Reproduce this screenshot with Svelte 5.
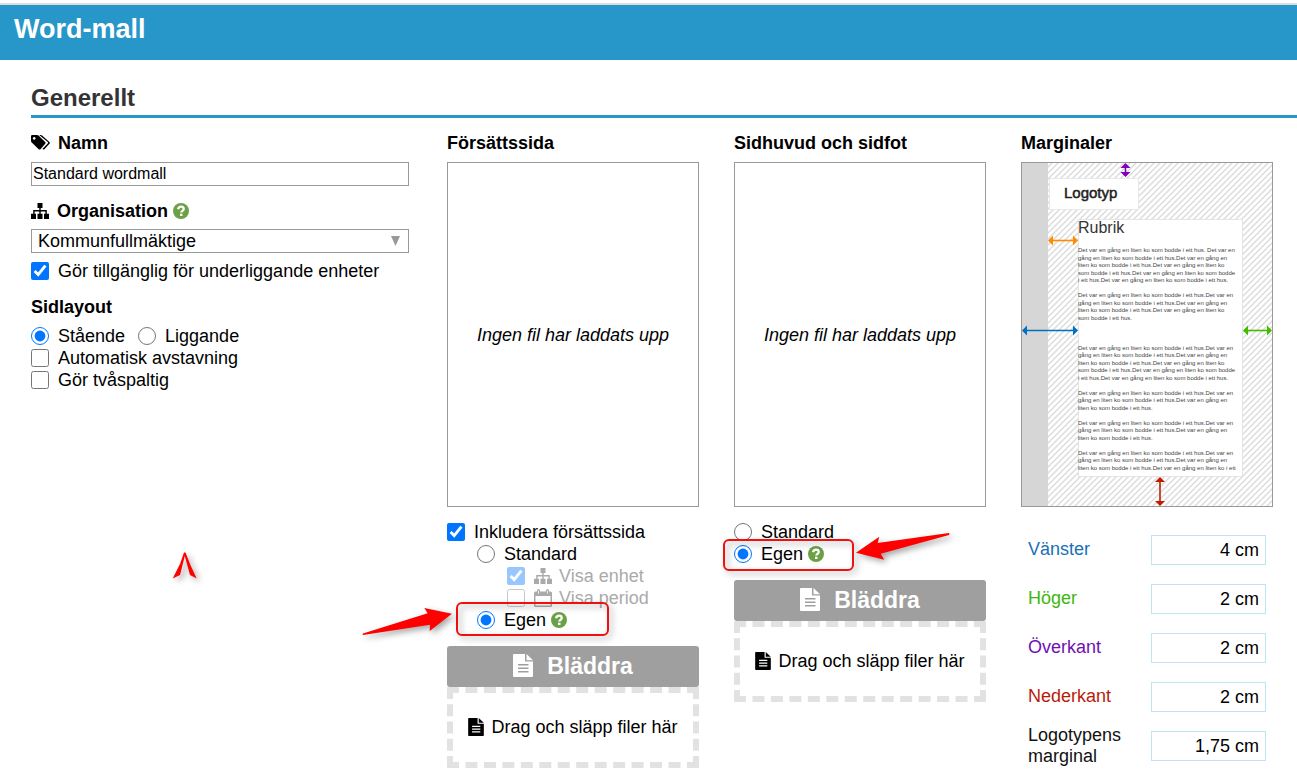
<script>
	let name = $state('Standard wordmall');
	let organisation = $state('Kommunfullmäktige');
	let shareWithUnits = $state(true);
	let orientation = $state('portrait');
	let hyphenation = $state(false);
	let twoColumns = $state(false);
	let includeCover = $state(true);
	let coverType = $state('custom');
	let showUnit = $state(true);
	let showPeriod = $state(false);
	let headerType = $state('custom');

	let margins = $state([
		{ id: 'left', label: 'Vänster', value: '4 cm', color: '#1a6fb8' },
		{ id: 'right', label: 'Höger', value: '2 cm', color: '#3fb60e' },
		{ id: 'top', label: 'Överkant', value: '2 cm', color: '#6d12b0' },
		{ id: 'bottom', label: 'Nederkant', value: '2 cm', color: '#b81c0c' },
		{ id: 'logo', label: 'Logotypens marginal', value: '1,75 cm', color: '#111' }
	]);

	// sample text in the margin preview, empty strings are blank lines
	const long = [
		'Det var en gång en liten ko som bodde i ett hus.Det var en',
		'gång en liten ko som bodde i ett hus.Det var en gång en',
		'liten ko som bodde i ett hus.Det var en gång en liten ko',
		'som bodde i ett hus.Det var en gång en liten ko som bodde',
		'i ett hus.Det var en gång en liten ko som bodde i ett hus.'
	];
	const short = [long[0], long[1], 'liten ko som bodde i ett hus.'];
	const sample = [
		'Det var en gång en liten ko som bodde i ett hus. Det var en', ...long.slice(1), '',
		long[0], long[1], long[2], 'som bodde i ett hus.', '', '', '',
		...long, '',
		...short, '',
		...short, '',
		long[0], long[1], 'liten ko som bodde i ett hus.Det var en gång en liten ko i ett'
	];
</script>

{#snippet sitemap()}
	<svg class="icon" width="18" height="16" viewBox="0 0 18 16" aria-hidden="true">
		<path d="M6.5 0h5v5h-1.8v2h6.1v3.8H18V16h-5v-5.2h1.4V8.4H9.7v2.4h1.8V16h-5v-5.2h1.8V8.4H3.6v2.4H5V16H0v-5.2h2.2V7h6.1V5H6.5z" fill="currentColor" />
	</svg>
{/snippet}

{#snippet help()}
	<svg class="help" width="16" height="16" viewBox="0 0 16 16" role="img" aria-label="Hjälp">
		<circle cx="8" cy="8" r="8" fill="#6ba046" />
		<path d="M5.1 6.3C5.4 4.5 6.5 3.7 8 3.7c1.6 0 2.7.9 2.7 2.2 0 1.9-2.4 1.9-2.4 3.7" fill="none" stroke="#fff" stroke-width="2.3" />
		<path d="M7 10.7h2.5v2.3H7z" fill="#fff" />
	</svg>
{/snippet}

{#snippet fileIcon(width, height)}
	<svg class="icon" {width} {height} viewBox="0 0 20 23" aria-hidden="true">
		<path fill-rule="evenodd" d="M1 0h11v7.5h8V22q0 1-1 1H1q-1 0-1-1V1q0-1 1-1zM5 10v1.4h10.5V10zm0 3.5v1.4h10.5v-1.4zM5 17v1.4h10.5V17z" fill="currentColor" />
		<path d="M13.5 0l6.5 6.2h-6.5z" fill="currentColor" />
	</svg>
{/snippet}

{#snippet upload(id)}
	<button class="browse" type="button">{@render fileIcon(20, 23)}Bläddra</button>
	<div class="dropzone" {id}>{@render fileIcon(16, 18)}Drag och släpp filer här</div>
{/snippet}

{#snippet arrow(x1, y1, x2, y2, color)}
	{@const angle = (Math.atan2(y2 - y1, x2 - x1) * 180) / Math.PI}
	{@const length = Math.hypot(x2 - x1, y2 - y1)}
	<g transform="translate({x1} {y1}) rotate({angle})" fill={color}>
		<path d="M3 -.8H{length - 3}V.8H3z" />
		<path d="M0 0L5 -5V5z" />
		<path d="M{length} 0l-5 -5v10z" />
	</g>
{/snippet}

<header>
	<h1>Word-mall</h1>
</header>

<main>
	<h2>Generellt</h2>

	<div class="columns">
		<section class="general">
			<label class="heading" for="name">
				<svg class="icon" width="19" height="16" viewBox="0 0 19 16" aria-hidden="true">
					<path fill-rule="evenodd" d="M0 1.2Q0 0 1.2 0H6q1 0 2 .9l6.2 6q.9.9 0 1.8L9.5 14.2q-.9.8-1.8 0L1 7.8Q0 7 0 6zM3.2 2a1.4 1.4 0 1 0 .01 0z" fill="currentColor" />
					<path d="M8.2 0h1.6q.8 0 1.6.8l7 6.2q.9.9 0 1.8l-5 5.4q-1.1.8-2-.1l5.3-5.6q.7-.7 0-1.4z" fill="currentColor" />
				</svg>
				Namn
			</label>
			<input id="name" class="text" type="text" bind:value={name} />

			<label class="heading" for="organisation">{@render sitemap()}<span>Organisation {@render help()}</span></label>
			<div class="select">
				<select id="organisation" bind:value={organisation}>
					<option>Kommunfullmäktige</option>
				</select>
				<svg width="9" height="10" viewBox="0 0 9 10" aria-hidden="true"><path d="M0 0h9L4.5 10z" fill="#999" /></svg>
			</div>
			<label class="option share"><input type="checkbox" bind:checked={shareWithUnits} />Gör tillgänglig för underliggande enheter</label>

			<h3 class="heading">Sidlayout</h3>
			<div class="inline">
				<label class="option"><input type="radio" name="orientation" value="portrait" bind:group={orientation} />Stående</label>
				<label class="option"><input type="radio" name="orientation" value="landscape" bind:group={orientation} />Liggande</label>
			</div>
			<label class="option"><input type="checkbox" bind:checked={hyphenation} />Automatisk avstavning</label>
			<label class="option"><input type="checkbox" bind:checked={twoColumns} />Gör tvåspaltig</label>

			<svg class="marker" width="32" height="34" viewBox="0 0 32 34" aria-hidden="true">
				<path d="M15 2.5h1.5L21 14l6.7 14.5L21 25 15.800 6 11 25l-7.300 3.500L11 14z" fill="#f00" />
			</svg>
		</section>

		<section>
			<h3 class="heading">Försättssida</h3>
			<div class="preview">Ingen fil har laddats upp</div>
			<label class="option"><input type="checkbox" bind:checked={includeCover} />Inkludera försättssida</label>
			<div class="nested">
				<label class="option"><input type="radio" name="cover" value="standard" bind:group={coverType} />Standard</label>
				<div class="nested muted">
					<label class="option"><input type="checkbox" bind:checked={showUnit} /><span>{@render sitemap()}Visa enhet</span></label>
					<label class="option">
						<input type="checkbox" bind:checked={showPeriod} />
						<span>
							<svg class="icon" width="18" height="18" viewBox="0 0 18 18" aria-hidden="true">
								<path fill-rule="evenodd" d="M1.5 2.5H3V1.5Q3 0 4.5 0T6 1.5v1h6V1.5Q12 0 13.5 0T15 1.500v1h1.5Q18 2.5 18 4v13q0 1-1.5 1h-15Q0 18 0 17V4Q0 2.5 1.5 2.5zM1.5 7v9.5h15V7zM4.2 1.5v3h.8v-3zM13.2 1.5v3h.8v-3z" fill="currentColor" />
							</svg>Visa period
						</span>
					</label>
				</div>
				<div class="annotated">
					<label class="option"><input type="radio" name="cover" value="custom" bind:group={coverType} /><span>Egen {@render help()}</span></label>
					<div class="highlight cover-highlight"></div>
					<svg class="pointer cover-pointer" width="100" height="36" viewBox="0 0 100 36" aria-hidden="true">
						<path d="M92 8.7L64.3 3l3.4 5.3L3 28.5q-1 1 0 1.5l67-10.3-.3 6.3z" fill="#f00" />
					</svg>
				</div>
			</div>
			{@render upload('cover-drop')}
		</section>

		<section>
			<h3 class="heading">Sidhuvud och sidfot</h3>
			<div class="preview">Ingen fil har laddats upp</div>
			<label class="option"><input type="radio" name="header" value="standard" bind:group={headerType} />Standard</label>
			<div class="annotated">
				<label class="option"><input type="radio" name="header" value="custom" bind:group={headerType} /><span>Egen {@render help()}</span></label>
				<div class="highlight header-highlight"></div>
				<svg class="pointer header-pointer" width="100" height="36" viewBox="0 0 100 36" aria-hidden="true">
					<path d="M2 22.7L25.3 6.7l-1.6 6.3L95 3q1 1 0 2L26.7 23.7l3.6 6z" fill="#f00" />
				</svg>
			</div>
			{@render upload('header-drop')}
		</section>

		<section>
			<h3 class="heading">Marginaler</h3>
			<div class="preview">
				<svg class="page" viewBox="0 0 250 343" role="img" aria-label="Marginaler">
					<defs>
						<pattern id="hatch" width="6" height="6" patternUnits="userSpaceOnUse">
							<path d="M-1 7L7 -1M-1 1L1 -1M5 7L7 5" stroke="#dcdcdc" stroke-width="1.5" />
						</pattern>
					</defs>
					<rect width="26" height="343" fill="#d6d6d6" />
					<rect x="26" width="224" height="343" fill="url(#hatch)" />
					<rect x="27.5" y="15.5" width="89" height="31" fill="#fff" stroke="#e8e8e8" />
					<rect x="56.5" y="56.5" width="164" height="257" fill="#fff" stroke="#e4e4e4" />
					<text class="logo" x="42" y="35">Logotyp</text>
					<text class="title" x="56" y="70">Rubrik</text>
					{#each sample as line, i}
						<text class="body" x="56" y={89 + i * 7.5}>{line}</text>
					{/each}
					{@render arrow(103.5, 0, 103.5, 14, '#7f00b8')}
					{@render arrow(26, 77.5, 56, 77.5, '#ff8c00')}
					{@render arrow(0, 167.5, 56, 167.5, '#0070c0')}
					{@render arrow(221, 167.5, 250, 167.5, '#44bb00')}
					{@render arrow(138, 314, 138, 343, '#c21d00')}
				</svg>
			</div>
			<div class="margins">
				{#each margins as margin (margin.id)}
					<div class="margin">
						<label for="margin-{margin.id}" style="color: {margin.color}">{margin.label}</label>
						<input id="margin-{margin.id}" type="text" bind:value={margin.value} />
					</div>
				{/each}
			</div>
		</section>
	</div>
</main>

<style>
	:global(body) {
		margin: 0;
		background: #fff;
		color: #000;
		font: 18px/22px "Liberation Sans", Arial, sans-serif;
	}

	:global(#app) {
		overflow: hidden;
	}

	header {
		margin-top: 3px;
		padding: 8px 14px 15px;
		border-top: 2px solid #dcdcdc;
		background: #2796c8;
	}

	h1 {
		margin: 0;
		font-size: 27px;
		line-height: 32px;
		color: #fff;
	}

	h2 {
		margin: 21px 0 0 31px;
		padding-bottom: 1px;
		border-bottom: 3px solid #2796c8;
		font-size: 24px;
		line-height: 33px;
		color: #333;
	}

	input,
	select,
	button {
		box-sizing: border-box;
		font: inherit;
		color: inherit;
	}

	.columns {
		display: grid;
		grid-template-columns: 381fr 252fr 252fr 252fr;
		column-gap: 35px;
		padding: 14px 24px 0 31px;
	}

	.general {
		position: relative;
		padding-right: 3px;
	}

	.heading {
		display: flex;
		align-items: center;
		gap: 8px;
		margin: 0 0 8px;
		font-size: 18px;
		font-weight: bold;
	}

	.icon {
		flex: none;
	}

	.help {
		vertical-align: -2px;
	}

	.text {
		display: block;
		width: 100%;
		height: 24px;
		padding: 0 1px;
		border: 1px solid #999;
		font-size: 16px;
	}

	.text + .heading,
	.share + .heading {
		margin-top: 14px;
		margin-bottom: 7px;
	}

	.select {
		position: relative;
	}

	.select select {
		display: block;
		width: 100%;
		height: 24px;
		padding: 0 24px 0 6px;
		border: 1px solid #999;
		border-radius: 0;
		background: #fff;
		appearance: none;
	}

	.select svg {
		position: absolute;
		top: 7px;
		right: 9px;
		pointer-events: none;
	}

	.option {
		display: flex;
		align-items: center;
		gap: 9px;
	}

	.option input {
		flex: none;
		width: 18px;
		height: 18px;
		margin: 0;
		accent-color: #0075ff;
	}

	.share {
		margin-top: 7px;
	}

	.inline {
		display: flex;
		gap: 13px;
	}

	.nested {
		padding-left: 30px;
	}

	.muted input {
		opacity: 0.4;
	}

	.muted span {
		display: flex;
		align-items: center;
		gap: 7px;
		color: #aaa;
	}

	.preview {
		display: flex;
		align-items: center;
		justify-content: center;
		box-sizing: border-box;
		aspect-ratio: 252 / 345;
		margin-bottom: 14px;
		border: 1px solid #999;
		font-style: italic;
	}

	.browse {
		display: flex;
		align-items: center;
		justify-content: center;
		gap: 14px;
		width: 100%;
		height: 41px;
		margin-top: 15px;
		padding: 0 0 2px;
		border: 0;
		border-radius: 3px;
		background: #9f9f9f;
		color: #fff;
		font-size: 23px;
		font-weight: bold;
	}

	.dropzone {
		display: flex;
		align-items: center;
		justify-content: center;
		gap: 7px;
		box-sizing: border-box;
		height: 81px;
		padding-bottom: 2px;
		border: 6px dashed #e2e2e2;
	}

	/* callouts drawn over the form */
	.annotated {
		position: relative;
	}

	.highlight,
	.pointer,
	.marker {
		position: absolute;
		pointer-events: none;
		filter: drop-shadow(3px 3px 3px rgba(0, 0, 0, 0.35));
	}

	.highlight {
		box-sizing: border-box;
		border: 2px solid #f01010;
		border-radius: 6px;
	}

	.cover-highlight {
		top: -7px;
		left: -21px;
		width: 153px;
		height: 34px;
	}

	.header-highlight {
		top: -4px;
		left: -11px;
		width: 131px;
		height: 32px;
	}

	.cover-pointer {
		top: -4px;
		left: -117px;
	}

	.header-pointer {
		top: -13px;
		left: 120px;
	}

	.marker {
		top: 418px;
		left: 138px;
	}

	.page {
		display: block;
		width: 100%;
		height: 100%;
		font-style: normal;
	}

	.logo {
		font-size: 15px;
		fill: #222;
		stroke: #222;
		stroke-width: 0.5px;
	}

	.title {
		font-size: 16px;
		fill: #333;
	}

	.body {
		font-size: 6px;
		fill: #444;
	}

	.margins {
		margin-top: 18px;
		padding: 0 7px;
	}

	.margin {
		display: flex;
		align-items: center;
		min-height: 49px;
	}

	.margin label {
		flex: 1;
		line-height: 21px;
	}

	.margin input {
		width: 115px;
		height: 30px;
		padding: 2px 6px 0;
		border: 1px solid #c0e4f4;
		text-align: right;
	}
</style>
